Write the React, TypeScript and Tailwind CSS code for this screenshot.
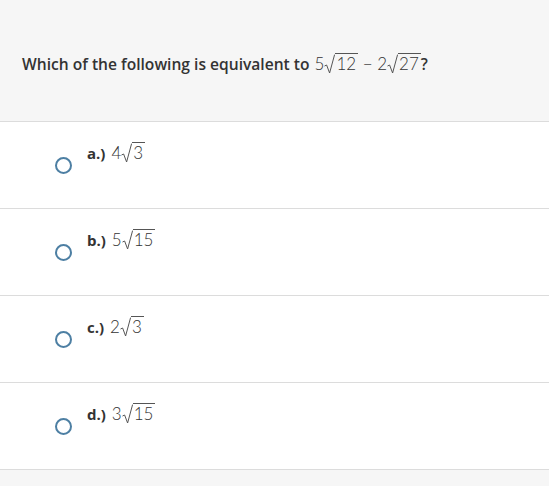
import React from "react";

const mathFont = { fontFamily: 'Lato, "Liberation Sans", Arial, sans-serif' };
const textFont = { fontFamily: '"Open Sans", sans-serif' };

function Sqrt({ children }: { children: React.ReactNode }) {
  return (
    <span className="whitespace-nowrap">
      <svg width="11" height="20" viewBox="0 0 11 20" className="inline-block align-[-4px]" fill="none">
        <path d="M0.5 12 L2.6 11 L5.6 19 L10.6 0.6" stroke="#555" strokeWidth="1" />
      </svg>
      <span className="inline-block border-t border-[#555] leading-[17px] pt-[1px] pl-[1px] pr-[2px]">{children}</span>
    </span>
  );
}

function Option({ label, coef, rad }: { label: string; coef: string; rad: string }) {
  return (
    <div className="h-[87px] border-b border-[#dcdcdc] flex">
      <div className="pl-[55px] pt-[35px]">
        <div className="w-[17px] h-[17px] rounded-full border-2 border-[#4d7fa3]" />
      </div>
      <div className="pl-[15px] pt-[18px] text-[#333] whitespace-nowrap">
        <span className="font-bold text-[15px]" style={textFont}>{label}</span>
        <span className="ml-[6px] text-[17px] font-light" style={mathFont}>
          {coef}
          <Sqrt>{rad}</Sqrt>
        </span>
      </div>
    </div>
  );
}

export default function App() {
  return (
    <div className="w-[549px] h-[486px] bg-[#f6f6f6] overflow-hidden">
      <div className="h-[122px] border-b border-[#dcdcdc] pl-[22px] pt-[51px]">
        <div className="text-[15.6px] text-[#333] whitespace-nowrap" style={textFont}>
          <span className="font-semibold">Which of the following is equivalent to</span>
          <span className="ml-[5px] text-[17px] font-light" style={mathFont}>
            5<Sqrt>12</Sqrt> − 2<Sqrt>27</Sqrt>
          </span>
          <span className="font-semibold">?</span>
        </div>
      </div>
      <div className="bg-white">
        <Option label="a.)" coef="4" rad="3" />
        <Option label="b.)" coef="5" rad="15" />
        <Option label="c.)" coef="2" rad="3" />
        <Option label="d.)" coef="3" rad="15" />
      </div>
    </div>
  );
}
